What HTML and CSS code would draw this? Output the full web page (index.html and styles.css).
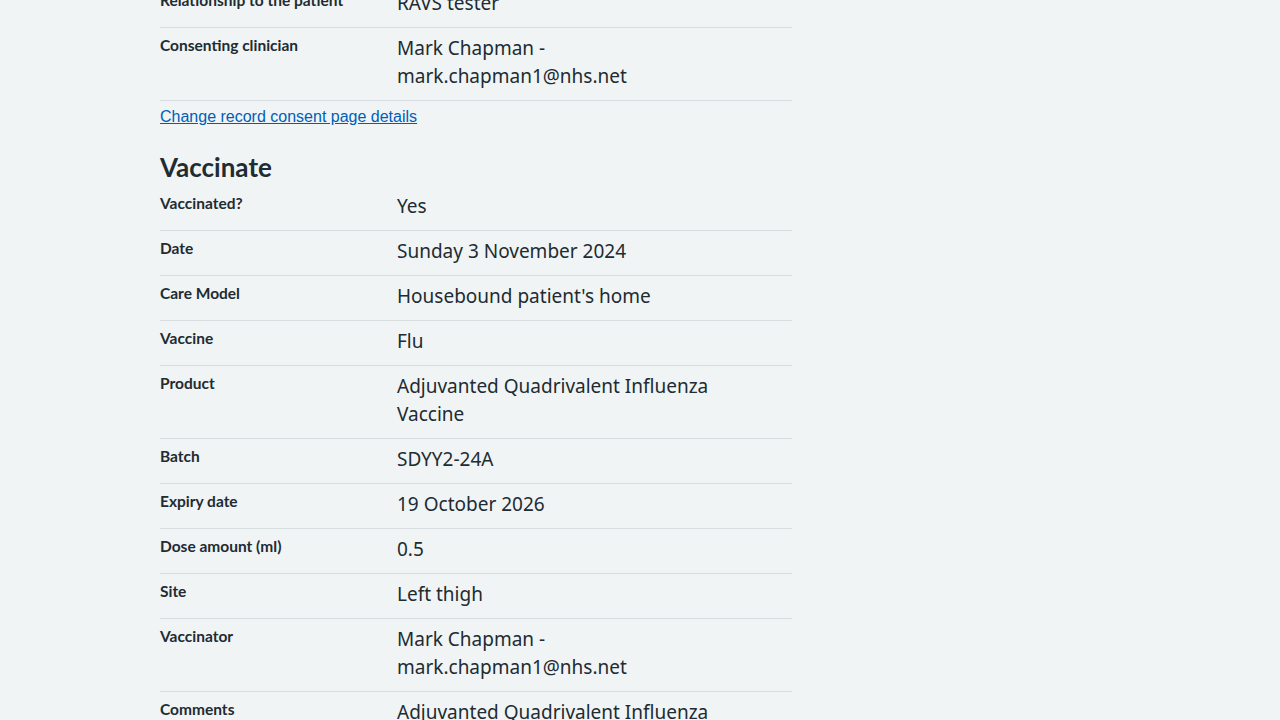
FILE: index.html
```html
<!DOCTYPE html>
<html lang="en">
<head>
<meta charset="utf-8">
<title>Check and confirm</title>
<link rel="stylesheet" href="styles.css">
</head>
<body>
<main class="container">
  <dl class="summary">
    <div class="row">
      <dt class="key">Relationship to the patient</dt>
      <dd class="value">RAVS tester</dd>
    </div>
    <div class="row">
      <dt class="key">Consenting clinician</dt>
      <dd class="value">Mark Chapman - mark.chapman1@nhs.net</dd>
    </div>
  </dl>
  <p class="change"><a class="link" href="#">Change record consent page details</a></p>

  <h2 class="heading">Vaccinate</h2>
  <dl class="summary">
    <div class="row">
      <dt class="key">Vaccinated?</dt>
      <dd class="value">Yes</dd>
    </div>
    <div class="row">
      <dt class="key">Date</dt>
      <dd class="value">Sunday 3 November 2024</dd>
    </div>
    <div class="row">
      <dt class="key">Care Model</dt>
      <dd class="value">Housebound patient's home</dd>
    </div>
    <div class="row">
      <dt class="key">Vaccine</dt>
      <dd class="value">Flu</dd>
    </div>
    <div class="row">
      <dt class="key">Product</dt>
      <dd class="value">Adjuvanted Quadrivalent Influenza Vaccine</dd>
    </div>
    <div class="row">
      <dt class="key">Batch</dt>
      <dd class="value">SDYY2-24A</dd>
    </div>
    <div class="row">
      <dt class="key">Expiry date</dt>
      <dd class="value">19 October 2026</dd>
    </div>
    <div class="row">
      <dt class="key">Dose amount (ml)</dt>
      <dd class="value">0.5</dd>
    </div>
    <div class="row">
      <dt class="key">Site</dt>
      <dd class="value">Left thigh</dd>
    </div>
    <div class="row">
      <dt class="key">Vaccinator</dt>
      <dd class="value">Mark Chapman - mark.chapman1@nhs.net</dd>
    </div>
    <div class="row">
      <dt class="key">Comments</dt>
      <dd class="value">Adjuvanted Quadrivalent Influenza Vaccine</dd>
    </div>
  </dl>
</main>
</body>
</html>
```
FILE: styles.css
```css
html, body {
  margin: 0;
  padding: 0;
  background: #f0f4f5;
  color: #212b32;
}

.container {
  width: 632px;
  margin: 0 auto 0 160px;
}

.summary {
  margin: 0;
}

.summary:first-child {
  margin-top: -17px;
}

.row {
  display: grid;
  grid-template-columns: 237px 345px;
  border-bottom: 1px solid #d8dde0;
}

.key {
  margin: 0;
  padding: 5px 24px 11px 0;
  font-family: Lato, "Liberation Sans", sans-serif;
  font-weight: 700;
  font-size: 15.5px;
  line-height: 24px;
}

.value {
  margin: 0;
  padding: 6px 0 10px 0;
  font-family: "Noto Sans", "Liberation Sans", sans-serif;
  font-size: 19px;
  line-height: 28px;
}

.change {
  margin: 4px 0 0 0;
  font-family: "Liberation Sans", Arial, sans-serif;
  font-size: 16px;
  line-height: 24px;
}

.link {
  color: #005eb8;
  text-decoration: underline;
}

.heading {
  margin: 22px 0 3px 0;
  font-family: Lato, "Liberation Sans", sans-serif;
  font-weight: 700;
  font-size: 26px;
  line-height: 32px;
}
```
